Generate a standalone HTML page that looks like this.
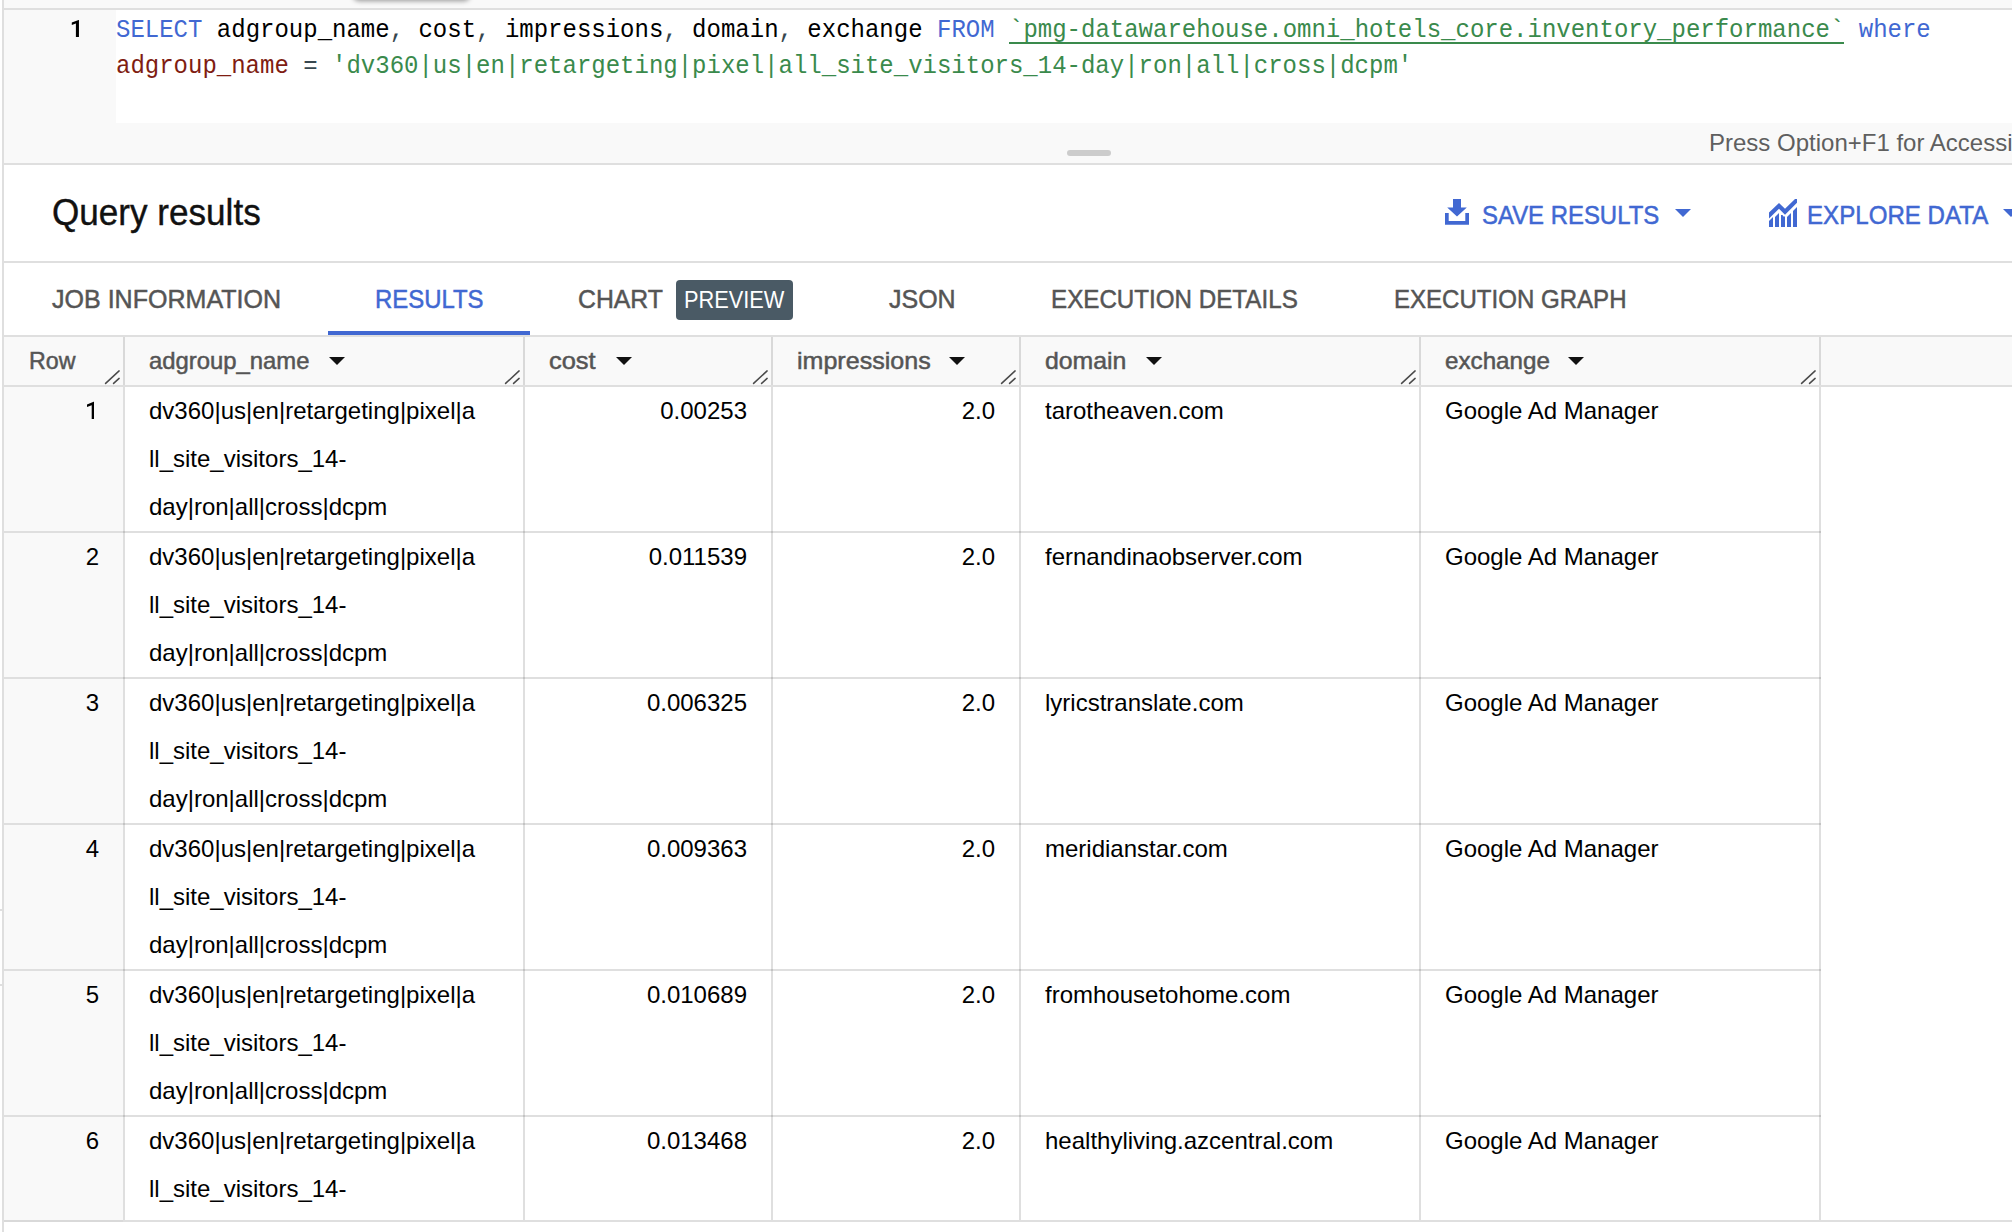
<!DOCTYPE html>
<html><head><meta charset="utf-8"><style>
html,body{margin:0;padding:0;background:#fff;width:2012px;height:1232px;overflow:hidden;position:relative}
.t{position:absolute;white-space:pre;font-family:'Liberation Sans', sans-serif}
.r{position:absolute}
#root{position:relative;width:2012px;height:1232px;overflow:hidden;background:#fff}
</style></head><body><div id="root">
<div class="r" style="left:2px;top:0px;width:2px;height:1232px;background:rgba(0,0,0,0.125);"></div>
<div class="r" style="left:4px;top:0px;width:2008px;height:8px;background:#f9f9f9;"></div>
<div class="r" style="left:4px;top:8px;width:2008px;height:2px;background:rgba(0,0,0,0.125);"></div>
<div class="r" style="left:353px;top:-22px;width:117px;height:22px;background:#fff;border-radius:0 0 6px 6px;box-shadow:0 1px 5px rgba(0,0,0,.4)"></div>
<div class="r" style="left:4px;top:10px;width:112px;height:153px;background:#f9f9f9;"></div>
<div class="r" style="left:116px;top:10px;width:1896px;height:113px;background:#fff;"></div>
<div class="r" style="left:116px;top:123px;width:1896px;height:40px;background:#f9f9f9;"></div>
<div class="r" style="left:4px;top:163px;width:2008px;height:2px;background:rgba(0,0,0,0.125);"></div>
<div class="r" style="left:1067px;top:150px;width:44px;height:6px;background:#cccccc;border-radius:3px"></div>
<div class="t" style="left:116px;top:13px;font-size:24px;line-height:36px;color:#000;font-weight:400;font-family:'Liberation Mono', monospace;transform:scaleY(1.08);transform-origin:0 24px;"><span style="color:#4168d2">SELECT</span> adgroup_name<span style="color:#37474f">,</span> cost<span style="color:#37474f">,</span> impressions<span style="color:#37474f">,</span> domain<span style="color:#37474f">,</span> exchange <span style="color:#4168d2">FROM</span> <span style="color:#3a8a4c">`pmg-datawarehouse.omni_hotels_core.inventory_performance`</span> <span style="color:#4168d2">where</span></div>
<div class="t" style="left:116px;top:49px;font-size:24px;line-height:36px;color:#000;font-weight:400;font-family:'Liberation Mono', monospace;transform:scaleY(1.08);transform-origin:0 24px;"><span style="color:#7f1d12">adgroup_name</span> <span style="color:#37474f">=</span> <span style="color:#3a8a4c">'dv360|us|en|retargeting|pixel|all_site_visitors_14-day|ron|all|cross|dcpm'</span></div>
<div class="r" style="left:1009px;top:42px;width:835px;height:2px;background:#3a8a4c;"></div>
<svg class="r" style="left:66px;top:16px" width="20" height="24" viewBox="0 0 20 24"><path fill="#000" d="M12.95 4V20.9H9.9V7.4L5.8 8.9V6.4L12.6 4Z"/></svg>
<div class="t" style="left:1709px;top:123px;font-size:24px;line-height:40px;color:#5f5f5f;font-weight:400;font-family:'Liberation Sans', sans-serif;">Press Option+F1 for Accessibility Options.</div>
<div class="t" style="left:52px;top:189px;font-size:36px;line-height:48px;color:#111;font-weight:400;font-family:'Liberation Sans', sans-serif;transform:scaleX(0.975);transform-origin:0 0;-webkit-text-stroke:0.4px #111;">Query results</div>
<svg class="r" style="left:1445px;top:199px" width="24" height="26" viewBox="0 0 24 26"><path fill="#4168d2" d="M8 0h8v8.5h5.8L12 17.6 2.2 8.5H8z"/><path fill="#4168d2" d="M0 14h3.7v8h16.6v-8H24v11.8H0z"/></svg>
<div class="t" style="left:1482px;top:195px;font-size:26px;line-height:40px;color:#4168d2;font-weight:400;font-family:'Liberation Sans', sans-serif;transform:scaleX(0.92);transform-origin:0 0;-webkit-text-stroke:0.5px #4168d2;">SAVE RESULTS</div>
<svg class="r" style="left:1675px;top:209px" width="16" height="8" viewBox="0 0 16 8"><path fill="#4168d2" d="M0 0h16l-8 8z"/></svg>
<svg class="r" style="left:1764px;top:194px" width="38" height="38" viewBox="0 0 38 38"><path fill="#4168d2" d="M5 18.5L15 9L21 14.7L31 5H33V8.8L21 20.7L15 14.8L5 24.4Z"/><path fill="#4168d2" d="M5 27L9 23V33H5ZM11 23L15 19V33H11ZM17 21H18.5L19.5 22.5H21V33H17ZM23 23L27 19V33H23ZM29 17L33 13V33H29Z"/></svg>
<div class="t" style="left:1807px;top:195px;font-size:26px;line-height:40px;color:#4168d2;font-weight:400;font-family:'Liberation Sans', sans-serif;transform:scaleX(0.927);transform-origin:0 0;-webkit-text-stroke:0.5px #4168d2;">EXPLORE DATA</div>
<svg class="r" style="left:2003px;top:209px" width="16" height="8" viewBox="0 0 16 8"><path fill="#4168d2" d="M0 0h16l-8 8z"/></svg>
<div class="r" style="left:4px;top:261px;width:2008px;height:2px;background:rgba(0,0,0,0.125);"></div>
<div class="t" style="left:52px;top:279px;font-size:26px;line-height:40px;color:#555555;font-weight:400;font-family:'Liberation Sans', sans-serif;transform:scaleX(0.963);transform-origin:0 0;-webkit-text-stroke:0.5px #555555;">JOB INFORMATION</div>
<div class="t" style="left:375px;top:279px;font-size:26px;line-height:40px;color:#4168d2;font-weight:400;font-family:'Liberation Sans', sans-serif;transform:scaleX(0.92);transform-origin:0 0;-webkit-text-stroke:0.5px #4168d2;">RESULTS</div>
<div class="r" style="left:328px;top:331px;width:202px;height:4px;background:#4168d2;"></div>
<div class="t" style="left:578px;top:279px;font-size:26px;line-height:40px;color:#555555;font-weight:400;font-family:'Liberation Sans', sans-serif;transform:scaleX(0.954);transform-origin:0 0;-webkit-text-stroke:0.5px #555555;">CHART</div>
<div class="r" style="left:676px;top:280px;width:117px;height:40px;background:#4a5a65;border-radius:4px"></div>
<div class="t" style="left:684px;top:280px;font-size:24px;line-height:40px;color:#fff;font-weight:400;font-family:'Liberation Sans', sans-serif;transform:scaleX(0.907);transform-origin:0 0;">PREVIEW</div>
<div class="t" style="left:889px;top:279px;font-size:26px;line-height:40px;color:#555555;font-weight:400;font-family:'Liberation Sans', sans-serif;transform:scaleX(0.96);transform-origin:0 0;-webkit-text-stroke:0.5px #555555;">JSON</div>
<div class="t" style="left:1051px;top:279px;font-size:26px;line-height:40px;color:#555555;font-weight:400;font-family:'Liberation Sans', sans-serif;transform:scaleX(0.93);transform-origin:0 0;-webkit-text-stroke:0.5px #555555;">EXECUTION DETAILS</div>
<div class="t" style="left:1394px;top:279px;font-size:26px;line-height:40px;color:#555555;font-weight:400;font-family:'Liberation Sans', sans-serif;transform:scaleX(0.925);transform-origin:0 0;-webkit-text-stroke:0.5px #555555;">EXECUTION GRAPH</div>
<div class="r" style="left:4px;top:335px;width:2008px;height:2px;background:rgba(0,0,0,0.125);"></div>
<div class="r" style="left:4px;top:337px;width:2008px;height:48px;background:#f9f9f9;"></div>
<div class="r" style="left:4px;top:385px;width:2008px;height:2px;background:rgba(0,0,0,0.125);"></div>
<div class="t" style="left:29px;top:337px;font-size:24px;line-height:48px;color:#555555;font-weight:400;font-family:'Liberation Sans', sans-serif;transform:scaleX(0.967);transform-origin:0 0;-webkit-text-stroke:0.5px #555555;">Row</div>
<div class="t" style="left:149px;top:337px;font-size:24px;line-height:48px;color:#555555;font-weight:400;font-family:'Liberation Sans', sans-serif;transform:scaleX(0.994);transform-origin:0 0;-webkit-text-stroke:0.5px #555555;">adgroup_name</div>
<svg class="r" style="left:329px;top:357px" width="16" height="8" viewBox="0 0 16 8"><path fill="#111" d="M0 0h16l-8 8z"/></svg>
<div class="t" style="left:549px;top:337px;font-size:24px;line-height:48px;color:#555555;font-weight:400;font-family:'Liberation Sans', sans-serif;transform:scaleX(1.06);transform-origin:0 0;-webkit-text-stroke:0.5px #555555;">cost</div>
<svg class="r" style="left:616px;top:357px" width="16" height="8" viewBox="0 0 16 8"><path fill="#111" d="M0 0h16l-8 8z"/></svg>
<div class="t" style="left:797px;top:337px;font-size:24px;line-height:48px;color:#555555;font-weight:400;font-family:'Liberation Sans', sans-serif;transform:scaleX(1.044);transform-origin:0 0;-webkit-text-stroke:0.5px #555555;">impressions</div>
<svg class="r" style="left:949px;top:357px" width="16" height="8" viewBox="0 0 16 8"><path fill="#111" d="M0 0h16l-8 8z"/></svg>
<div class="t" style="left:1045px;top:337px;font-size:24px;line-height:48px;color:#555555;font-weight:400;font-family:'Liberation Sans', sans-serif;transform:scaleX(1.034);transform-origin:0 0;-webkit-text-stroke:0.5px #555555;">domain</div>
<svg class="r" style="left:1146px;top:357px" width="16" height="8" viewBox="0 0 16 8"><path fill="#111" d="M0 0h16l-8 8z"/></svg>
<div class="t" style="left:1445px;top:337px;font-size:24px;line-height:48px;color:#555555;font-weight:400;font-family:'Liberation Sans', sans-serif;transform:scaleX(1.008);transform-origin:0 0;-webkit-text-stroke:0.5px #555555;">exchange</div>
<svg class="r" style="left:1568px;top:357px" width="16" height="8" viewBox="0 0 16 8"><path fill="#111" d="M0 0h16l-8 8z"/></svg>
<svg class="r" style="left:104px;top:369px" width="16" height="16" viewBox="0 0 16 16"><path stroke="#4a4a4a" stroke-width="1.5" stroke-linecap="round" fill="none" d="M1.6 14.4L15.1 1.9M9.6 14.4L15.1 9.4"/></svg>
<svg class="r" style="left:504px;top:369px" width="16" height="16" viewBox="0 0 16 16"><path stroke="#4a4a4a" stroke-width="1.5" stroke-linecap="round" fill="none" d="M1.6 14.4L15.1 1.9M9.6 14.4L15.1 9.4"/></svg>
<svg class="r" style="left:752px;top:369px" width="16" height="16" viewBox="0 0 16 16"><path stroke="#4a4a4a" stroke-width="1.5" stroke-linecap="round" fill="none" d="M1.6 14.4L15.1 1.9M9.6 14.4L15.1 9.4"/></svg>
<svg class="r" style="left:1000px;top:369px" width="16" height="16" viewBox="0 0 16 16"><path stroke="#4a4a4a" stroke-width="1.5" stroke-linecap="round" fill="none" d="M1.6 14.4L15.1 1.9M9.6 14.4L15.1 9.4"/></svg>
<svg class="r" style="left:1400px;top:369px" width="16" height="16" viewBox="0 0 16 16"><path stroke="#4a4a4a" stroke-width="1.5" stroke-linecap="round" fill="none" d="M1.6 14.4L15.1 1.9M9.6 14.4L15.1 9.4"/></svg>
<svg class="r" style="left:1800px;top:369px" width="16" height="16" viewBox="0 0 16 16"><path stroke="#4a4a4a" stroke-width="1.5" stroke-linecap="round" fill="none" d="M1.6 14.4L15.1 1.9M9.6 14.4L15.1 9.4"/></svg>
<div class="r" style="left:123px;top:337px;width:2px;height:48px;background:rgba(0,0,0,0.125);"></div>
<div class="r" style="left:523px;top:337px;width:2px;height:48px;background:rgba(0,0,0,0.125);"></div>
<div class="r" style="left:771px;top:337px;width:2px;height:48px;background:rgba(0,0,0,0.125);"></div>
<div class="r" style="left:1019px;top:337px;width:2px;height:48px;background:rgba(0,0,0,0.125);"></div>
<div class="r" style="left:1419px;top:337px;width:2px;height:48px;background:rgba(0,0,0,0.125);"></div>
<div class="r" style="left:1819px;top:337px;width:2px;height:48px;background:rgba(0,0,0,0.125);"></div>
<div class="r" style="left:4px;top:387px;width:119px;height:144px;background:#f9f9f9;"></div>
<svg class="r" style="left:80px;top:398px" width="20" height="24" viewBox="0 0 20 24"><path fill="#000" d="M14 3.8V20.9H11.7V7.2L7 8.9V6.6L13.6 3.8Z"/></svg>
<div class="t" style="left:149px;top:387px;font-size:24px;line-height:48px;color:#000">dv360|us|en|retargeting|pixel|a<br>ll_site_visitors_14-<br>day|ron|all|cross|dcpm</div>
<div class="t" style="left:525px;width:222px;text-align:right;top:387px;font-size:24px;line-height:48px;color:#000">0.00253</div>
<div class="t" style="left:773px;width:222px;text-align:right;top:387px;font-size:24px;line-height:48px;color:#000">2.0</div>
<div class="t" style="left:1045px;top:387px;font-size:24px;line-height:48px;color:#000">tarotheaven.com</div>
<div class="t" style="left:1445px;top:387px;font-size:24px;line-height:48px;color:#000">Google Ad Manager</div>
<div class="r" style="left:4px;top:531px;width:1817px;height:2px;background:rgba(0,0,0,0.125);"></div>
<div class="r" style="left:4px;top:533px;width:119px;height:144px;background:#f9f9f9;"></div>
<div class="t" style="left:27px;width:72px;text-align:right;top:533px;font-size:24px;line-height:48px;color:#000">2</div>
<div class="t" style="left:149px;top:533px;font-size:24px;line-height:48px;color:#000">dv360|us|en|retargeting|pixel|a<br>ll_site_visitors_14-<br>day|ron|all|cross|dcpm</div>
<div class="t" style="left:525px;width:222px;text-align:right;top:533px;font-size:24px;line-height:48px;color:#000">0.011539</div>
<div class="t" style="left:773px;width:222px;text-align:right;top:533px;font-size:24px;line-height:48px;color:#000">2.0</div>
<div class="t" style="left:1045px;top:533px;font-size:24px;line-height:48px;color:#000">fernandinaobserver.com</div>
<div class="t" style="left:1445px;top:533px;font-size:24px;line-height:48px;color:#000">Google Ad Manager</div>
<div class="r" style="left:4px;top:677px;width:1817px;height:2px;background:rgba(0,0,0,0.125);"></div>
<div class="r" style="left:4px;top:679px;width:119px;height:144px;background:#f9f9f9;"></div>
<div class="t" style="left:27px;width:72px;text-align:right;top:679px;font-size:24px;line-height:48px;color:#000">3</div>
<div class="t" style="left:149px;top:679px;font-size:24px;line-height:48px;color:#000">dv360|us|en|retargeting|pixel|a<br>ll_site_visitors_14-<br>day|ron|all|cross|dcpm</div>
<div class="t" style="left:525px;width:222px;text-align:right;top:679px;font-size:24px;line-height:48px;color:#000">0.006325</div>
<div class="t" style="left:773px;width:222px;text-align:right;top:679px;font-size:24px;line-height:48px;color:#000">2.0</div>
<div class="t" style="left:1045px;top:679px;font-size:24px;line-height:48px;color:#000">lyricstranslate.com</div>
<div class="t" style="left:1445px;top:679px;font-size:24px;line-height:48px;color:#000">Google Ad Manager</div>
<div class="r" style="left:4px;top:823px;width:1817px;height:2px;background:rgba(0,0,0,0.125);"></div>
<div class="r" style="left:4px;top:825px;width:119px;height:144px;background:#f9f9f9;"></div>
<div class="t" style="left:27px;width:72px;text-align:right;top:825px;font-size:24px;line-height:48px;color:#000">4</div>
<div class="t" style="left:149px;top:825px;font-size:24px;line-height:48px;color:#000">dv360|us|en|retargeting|pixel|a<br>ll_site_visitors_14-<br>day|ron|all|cross|dcpm</div>
<div class="t" style="left:525px;width:222px;text-align:right;top:825px;font-size:24px;line-height:48px;color:#000">0.009363</div>
<div class="t" style="left:773px;width:222px;text-align:right;top:825px;font-size:24px;line-height:48px;color:#000">2.0</div>
<div class="t" style="left:1045px;top:825px;font-size:24px;line-height:48px;color:#000">meridianstar.com</div>
<div class="t" style="left:1445px;top:825px;font-size:24px;line-height:48px;color:#000">Google Ad Manager</div>
<div class="r" style="left:4px;top:969px;width:1817px;height:2px;background:rgba(0,0,0,0.125);"></div>
<div class="r" style="left:4px;top:971px;width:119px;height:144px;background:#f9f9f9;"></div>
<div class="t" style="left:27px;width:72px;text-align:right;top:971px;font-size:24px;line-height:48px;color:#000">5</div>
<div class="t" style="left:149px;top:971px;font-size:24px;line-height:48px;color:#000">dv360|us|en|retargeting|pixel|a<br>ll_site_visitors_14-<br>day|ron|all|cross|dcpm</div>
<div class="t" style="left:525px;width:222px;text-align:right;top:971px;font-size:24px;line-height:48px;color:#000">0.010689</div>
<div class="t" style="left:773px;width:222px;text-align:right;top:971px;font-size:24px;line-height:48px;color:#000">2.0</div>
<div class="t" style="left:1045px;top:971px;font-size:24px;line-height:48px;color:#000">fromhousetohome.com</div>
<div class="t" style="left:1445px;top:971px;font-size:24px;line-height:48px;color:#000">Google Ad Manager</div>
<div class="r" style="left:4px;top:1115px;width:1817px;height:2px;background:rgba(0,0,0,0.125);"></div>
<div class="r" style="left:4px;top:1117px;width:119px;height:144px;background:#f9f9f9;"></div>
<div class="t" style="left:27px;width:72px;text-align:right;top:1117px;font-size:24px;line-height:48px;color:#000">6</div>
<div class="t" style="left:149px;top:1117px;font-size:24px;line-height:48px;color:#000">dv360|us|en|retargeting|pixel|a<br>ll_site_visitors_14-<br>day|ron|all|cross|dcpm</div>
<div class="t" style="left:525px;width:222px;text-align:right;top:1117px;font-size:24px;line-height:48px;color:#000">0.013468</div>
<div class="t" style="left:773px;width:222px;text-align:right;top:1117px;font-size:24px;line-height:48px;color:#000">2.0</div>
<div class="t" style="left:1045px;top:1117px;font-size:24px;line-height:48px;color:#000">healthyliving.azcentral.com</div>
<div class="t" style="left:1445px;top:1117px;font-size:24px;line-height:48px;color:#000">Google Ad Manager</div>
<div class="r" style="left:123px;top:387px;width:2px;height:833px;background:rgba(0,0,0,0.125);"></div>
<div class="r" style="left:523px;top:387px;width:2px;height:833px;background:rgba(0,0,0,0.125);"></div>
<div class="r" style="left:771px;top:387px;width:2px;height:833px;background:rgba(0,0,0,0.125);"></div>
<div class="r" style="left:1019px;top:387px;width:2px;height:833px;background:rgba(0,0,0,0.125);"></div>
<div class="r" style="left:1419px;top:387px;width:2px;height:833px;background:rgba(0,0,0,0.125);"></div>
<div class="r" style="left:1819px;top:387px;width:2px;height:833px;background:rgba(0,0,0,0.125);"></div>
<div class="r" style="left:4px;top:1220px;width:2008px;height:2px;background:rgba(0,0,0,0.125);"></div>
<div class="r" style="left:1822px;top:387px;width:190px;height:833px;background:#fff;"></div>
<div class="r" style="left:0px;top:1222px;width:2012px;height:10px;background:#fff;"></div>
<div class="r" style="left:2px;top:1222px;width:2px;height:10px;background:rgba(0,0,0,0.125);"></div>
<div class="r" style="left:0px;top:909px;width:2px;height:2px;background:rgba(0,0,0,0.125);"></div>
<div class="r" style="left:0px;top:984px;width:2px;height:2px;background:rgba(0,0,0,0.125);"></div>
</div></body></html>
